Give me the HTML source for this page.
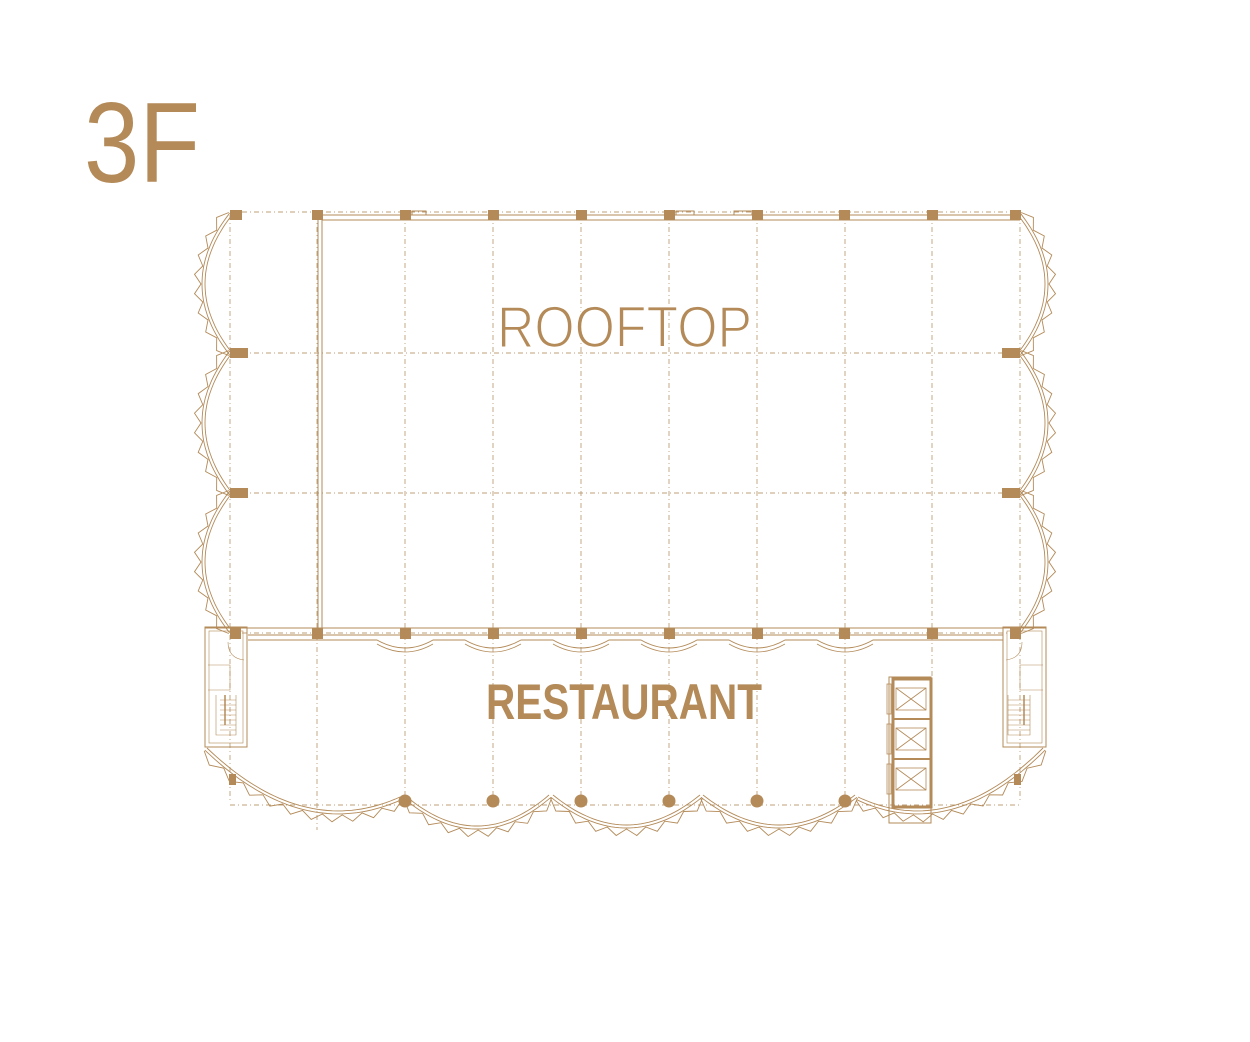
<!DOCTYPE html>
<html><head><meta charset="utf-8"><style>
html,body{margin:0;padding:0;background:#fff;width:1250px;height:1042px;overflow:hidden}
svg{display:block}
</style></head><body>
<svg id="s" width="1250" height="1042" viewBox="0 0 1250 1042" xmlns="http://www.w3.org/2000/svg">
<g fill="none" stroke="#b38a58">
<g stroke="#bfa07a" stroke-width="0.9" stroke-dasharray="5,3,1,3">
<line x1="230" y1="212" x2="1022" y2="212"/>
<line x1="230" y1="353" x2="1022" y2="353"/>
<line x1="230" y1="493" x2="1022" y2="493"/>
<line x1="230" y1="633" x2="1022" y2="633"/>
<line x1="230" y1="805" x2="1022" y2="805"/>
<line x1="230" y1="215" x2="230" y2="800"/>
<line x1="317" y1="215" x2="317" y2="830"/>
<line x1="405" y1="215" x2="405" y2="800"/>
<line x1="493" y1="215" x2="493" y2="800"/>
<line x1="581" y1="215" x2="581" y2="800"/>
<line x1="669" y1="215" x2="669" y2="800"/>
<line x1="757" y1="215" x2="757" y2="800"/>
<line x1="845" y1="215" x2="845" y2="800"/>
<line x1="932" y1="215" x2="932" y2="800"/>
<line x1="1020" y1="215" x2="1020" y2="800"/>
</g>
<g stroke-width="1">
<line x1="318" y1="216" x2="318" y2="630"/>
<line x1="322" y1="220" x2="322" y2="630"/>
<line x1="320" y1="215" x2="1020" y2="215"/>
<line x1="322" y1="220" x2="1020" y2="220"/>
<rect x="412" y="211" width="14" height="4"/>
<rect x="676" y="211" width="18" height="4"/>
<rect x="734" y="211" width="18" height="4"/>
<line x1="205" y1="628" x2="1046" y2="628"/>
<line x1="248" y1="635" x2="1003" y2="635"/>
<path d="M248 640 H377 Q405 656 433 640 H465 Q493 656 521 640 H553 Q581 656 609 640 H641 Q669 656 697 640 H729 Q757 656 785 640 H817 Q845 656 873 640 H1003"/>
<path d="M377 644 Q405 660 433 644 M465 644 Q493 660 521 644 M553 644 Q581 660 609 644 M641 644 Q669 660 697 644 M729 644 Q757 660 785 644 M817 644 Q845 660 873 644" stroke-width="0.8"/>
<rect x="205" y="627" width="42" height="120"/>
<rect x="209" y="631" width="34" height="112" stroke-width="0.6"/>
<rect x="1003" y="627" width="43" height="120"/>
<rect x="1007" y="631" width="35" height="112" stroke-width="0.6"/>
</g>
<g stroke-width="0.6">
<path d="M208 665 H230 V690 H208 M216 695 V735 H236 V695 M220 700 H236 M220 705 H236 M220 710 H236 M220 715 H236 M220 720 H236 M220 725 H236 M220 730 H236"/>
<path d="M1043 665 H1020 V690 H1043 M1008 695 V735 H1030 V695 M1008 700 H1030 M1008 705 H1030 M1008 710 H1030 M1008 715 H1030 M1008 720 H1030 M1008 725 H1030 M1008 730 H1030"/>
<path d="M228 642 Q228 658 244 660 M1022 642 Q1022 658 1006 660"/>
</g>
<line x1="225" y1="695" x2="225" y2="725" stroke-width="1.5"/>
<line x1="1024" y1="695" x2="1024" y2="725" stroke-width="1.5"/>
<rect x="889" y="677" width="42" height="146" stroke-width="1"/>
<rect x="893" y="679" width="38" height="128" stroke-width="3"/>
<g stroke-width="0.8">
<rect x="896" y="688" width="30" height="22"/><path d="M896 688 L926 710 M926 688 L896 710"/>
<rect x="896" y="728" width="30" height="22"/><path d="M896 728 L926 750 M926 728 L896 750"/>
<rect x="896" y="768" width="30" height="22"/><path d="M896 768 L926 790 M926 768 L896 790"/>
<line x1="893" y1="719" x2="931" y2="719" stroke-width="2"/>
<line x1="893" y1="759" x2="931" y2="759" stroke-width="2"/>
<rect x="887" y="684" width="4" height="30"/><rect x="887" y="724" width="4" height="30"/><rect x="887" y="764" width="4" height="30"/>
</g>
<g id="arcs" stroke-width="0.9"></g>
</g>
<g fill="#b38a58">
<rect x="230" y="210" width="12" height="10"/><rect x="312" y="210" width="11" height="10"/><rect x="400" y="210" width="11" height="10"/><rect x="488" y="210" width="11" height="10"/><rect x="576" y="210" width="11" height="10"/><rect x="664" y="210" width="11" height="10"/><rect x="752" y="210" width="11" height="10"/><rect x="839" y="210" width="11" height="10"/><rect x="927" y="210" width="11" height="10"/><rect x="1010" y="210" width="11" height="10"/>
<rect x="230" y="348" width="18" height="10"/><rect x="1002" y="348" width="18" height="10"/>
<rect x="230" y="488" width="18" height="10"/><rect x="1002" y="488" width="18" height="10"/>
<rect x="230" y="628" width="11" height="11"/><rect x="312" y="628" width="11" height="11"/><rect x="400" y="628" width="11" height="11"/><rect x="488" y="628" width="11" height="11"/><rect x="576" y="628" width="11" height="11"/><rect x="664" y="628" width="11" height="11"/><rect x="752" y="628" width="11" height="11"/><rect x="839" y="628" width="11" height="11"/><rect x="927" y="628" width="11" height="11"/><rect x="1010" y="628" width="11" height="11"/>
<rect x="229" y="774" width="7" height="11"/><rect x="1014" y="774" width="7" height="11"/>
<circle cx="405" cy="801" r="6.5"/><circle cx="493" cy="801" r="6.5"/><circle cx="581" cy="801" r="6.5"/><circle cx="669" cy="801" r="6.5"/><circle cx="757" cy="801" r="6.5"/><circle cx="845" cy="801" r="6.5"/>
</g>
<g font-family="Liberation Sans, sans-serif" fill="#b38a58">
<text x="84" y="182" font-size="114" textLength="116" lengthAdjust="spacingAndGlyphs">3F</text>
<text x="497" y="347" font-size="58" stroke="#fff" stroke-width="1.6" textLength="255" lengthAdjust="spacingAndGlyphs">ROOFTOP</text>
<text x="486" y="719" font-size="50" font-weight="bold" textLength="276" lengthAdjust="spacingAndGlyphs">RESTAURANT</text>
</g>
</svg>
<script>
(function(){
var g=document.getElementById('arcs'),NS='http://www.w3.org/2000/svg';
function add(d,w){var p=document.createElementNS(NS,'path');p.setAttribute('d',d);if(w)p.setAttribute('stroke-width',w);g.appendChild(p);}
function arc(x1,y1,x2,y2,s,nx,ny,n){
 function pt(t,o){var bx=x1+(x2-x1)*t,by=y1+(y2-y1)*t;
  var dx=(x2-x1)+nx*s*4*(1-2*t),dy=(y2-y1)+ny*s*4*(1-2*t);var L=Math.hypot(dx,dy);
  var px=-dy/L,py=dx/L; if(px*nx+py*ny<0){px=-px;py=-py;}
  var cx=bx+nx*s*4*t*(1-t),cy=by+ny*s*4*t*(1-t);
  return [cx+px*o,cy+py*o];}
 [0,3].forEach(function(o){var d='';for(var i=0;i<=40;i++){var p=pt(i/40,o);d+=(i?'L':'M')+p[0].toFixed(1)+' '+p[1].toFixed(1);}add(d);});
 var d='';for(var i=0;i<=n*2;i++){var t=i/(n*2);var p=pt(t,i%2?11:4);d+=(i?'L':'M')+p[0].toFixed(1)+' '+p[1].toFixed(1);}add(d,0.9);
}
arc(232,215,232,353,27,-1,0,8);arc(232,353,232,493,27,-1,0,8);arc(232,493,232,631,27,-1,0,8);
arc(1018,215,1018,353,27,1,0,8);arc(1018,353,1018,493,27,1,0,8);arc(1018,493,1018,631,27,1,0,8);
arc(207,748,400,797,34,0,1,10);arc(407,797,549,795,30,0,1,8);arc(553,795,700,795,30,0,1,8);
arc(703,795,855,795,30,0,1,8);arc(858,797,1043,748,34,0,1,10);
})();
</script>
</body></html>
